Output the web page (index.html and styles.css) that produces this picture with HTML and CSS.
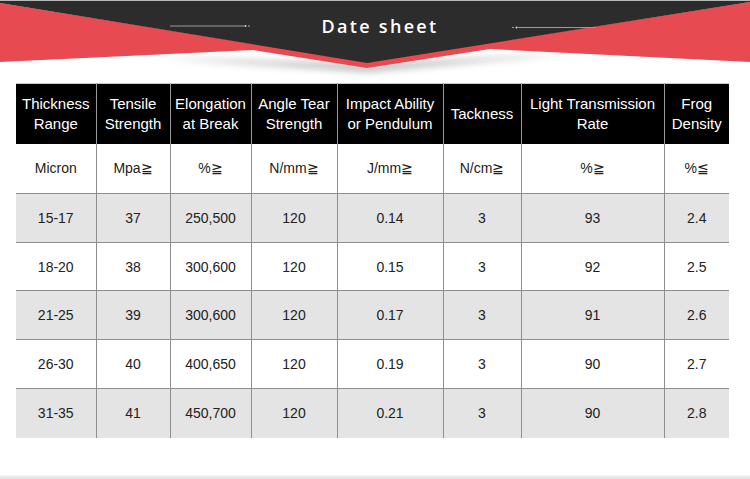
FILE: index.html
```html
<!DOCTYPE html>
<html>
<head>
<meta charset="utf-8">
<link rel="stylesheet" href="styles.css">
</head>
<body>
<div class="page">
  <header class="banner">
    <svg class="banner-art" width="750" height="83" viewBox="0 0 750 83" xmlns="http://www.w3.org/2000/svg">
      <defs>
        <filter id="blur" x="-20%" y="-200%" width="140%" height="500%">
          <feGaussianBlur stdDeviation="3.5"/>
        </filter>
      </defs>
      <rect x="0" y="0" width="750" height="1.5" fill="#b8b8b8"/>
      <polygon points="160,58 367,72 570,54 367,64" fill="#bdbdbd" filter="url(#blur)"/>
      <polygon points="0,3 367,62 367,68 253,50 0,62" fill="#e84a51"/>
      <polygon points="750,2 750,62 490,49 367,68 367,62" fill="#e84a51"/>
      <polygon points="0,1 750,1 750,2 367,63 0,3" fill="#2c2c2c"/>
      <line x1="170" y1="26" x2="244" y2="26" stroke="#9a9a9a" stroke-width="1"/>
      <circle cx="245.5" cy="26" r="1" fill="#e0e0e0"/>
      <circle cx="249" cy="26" r="0.8" fill="#bdbdbd"/>
      <circle cx="513" cy="27.5" r="0.8" fill="#bdbdbd"/>
      <circle cx="516.5" cy="27.5" r="1" fill="#e0e0e0"/>
      <line x1="518" y1="27.5" x2="596" y2="27.5" stroke="#9a9a9a" stroke-width="1"/>
    </svg>
    <h1 class="title">Date sheet</h1>
  </header>

  <table class="sheet">
    <colgroup>
      <col class="c1"><col class="c2"><col class="c3"><col class="c4">
      <col class="c5"><col class="c6"><col class="c7"><col class="c8">
    </colgroup>
    <thead>
      <tr class="head">
        <th>Thickness<br>Range</th>
        <th>Tensile<br>Strength</th>
        <th>Elongation<br>at Break</th>
        <th>Angle Tear<br>Strength</th>
        <th>Impact Ability<br>or Pendulum</th>
        <th>Tackness</th>
        <th>Light Transmission<br>Rate</th>
        <th>Frog<br>Density</th>
      </tr>
    </thead>
    <tbody>
      <tr class="units">
        <td>Micron</td><td>Mpa≧</td><td>%≧</td><td>N/mm≧</td><td>J/mm≧</td><td>N/cm≧</td><td>%≧</td><td>%≦</td>
      </tr>
      <tr class="row grey">
        <td>15-17</td><td>37</td><td>250,500</td><td>120</td><td>0.14</td><td>3</td><td>93</td><td>2.4</td>
      </tr>
      <tr class="row white short">
        <td>18-20</td><td>38</td><td>300,600</td><td>120</td><td>0.15</td><td>3</td><td>92</td><td>2.5</td>
      </tr>
      <tr class="row grey">
        <td>21-25</td><td>39</td><td>300,600</td><td>120</td><td>0.17</td><td>3</td><td>91</td><td>2.6</td>
      </tr>
      <tr class="row white">
        <td>26-30</td><td>40</td><td>400,650</td><td>120</td><td>0.19</td><td>3</td><td>90</td><td>2.7</td>
      </tr>
      <tr class="row grey last">
        <td>31-35</td><td>41</td><td>450,700</td><td>120</td><td>0.21</td><td>3</td><td>90</td><td>2.8</td>
      </tr>
    </tbody>
  </table>

  <div class="footer-rule"></div>
</div>
</body>
</html>
```

FILE: styles.css
```css
* { box-sizing: border-box; }

html, body {
  margin: 0;
  padding: 0;
  background: #ffffff;
}

.page {
  width: 750px;
  height: 479px;
  overflow: hidden;
  display: flex;
  flex-direction: column;
}

.banner {
  position: relative;
  height: 83px;
  flex: none;
  display: flex;
  justify-content: center;
}

.banner-art {
  position: absolute;
  left: 0;
  top: 0;
  display: block;
}

.title {
  position: relative;
  margin: 14px 0 0 10px;
  font-family: "Open Sans", "DejaVu Sans", sans-serif;
  font-weight: 600;
  font-size: 18px;
  line-height: 24px;
  letter-spacing: 2.3px;
  color: #ffffff;
}

.sheet {
  margin-left: 16px;
  width: 713px;
  table-layout: fixed;
  border-collapse: collapse;
  font-family: "Liberation Sans", Arial, sans-serif;
  flex: none;
}

.c1 { width: 80px; }
.c2 { width: 74px; }
.c3 { width: 81px; }
.c4 { width: 86px; }
.c5 { width: 106px; }
.c6 { width: 78px; }
.c7 { width: 143px; }
.c8 { width: 65px; }

.sheet th,
.sheet td {
  padding: 0;
  text-align: center;
  vertical-align: middle;
  border: 1px solid #8e8e8e;
}

.sheet th:first-child,
.sheet td:first-child { border-left: none; }
.sheet th:last-child,
.sheet td:last-child { border-right: none; }

.head th {
  height: 60px;
  background: #000000;
  color: #ffffff;
  font-weight: normal;
  font-size: 15px;
  line-height: 20px;
  border-top: 1px solid #c8c8c8;
  border-bottom: none;
  border-left-color: #9a9a9a;
  border-right-color: #9a9a9a;
}

.units td {
  height: 50px;
  background: #ffffff;
  border-top: none;
  font-size: 14px;
  color: #222222;
}

.row td {
  height: 49px;
  font-size: 14px;
  color: #222222;
}

.row.short td { height: 48px; }

.row.grey td { background: #e4e4e4; }
.row.white td { background: #ffffff; }

.row.last td { border-bottom: none; }

.footer-rule {
  margin-top: auto;
  height: 4px;
  flex: none;
  background: linear-gradient(#f6f6f6, #dedede);
}
```
